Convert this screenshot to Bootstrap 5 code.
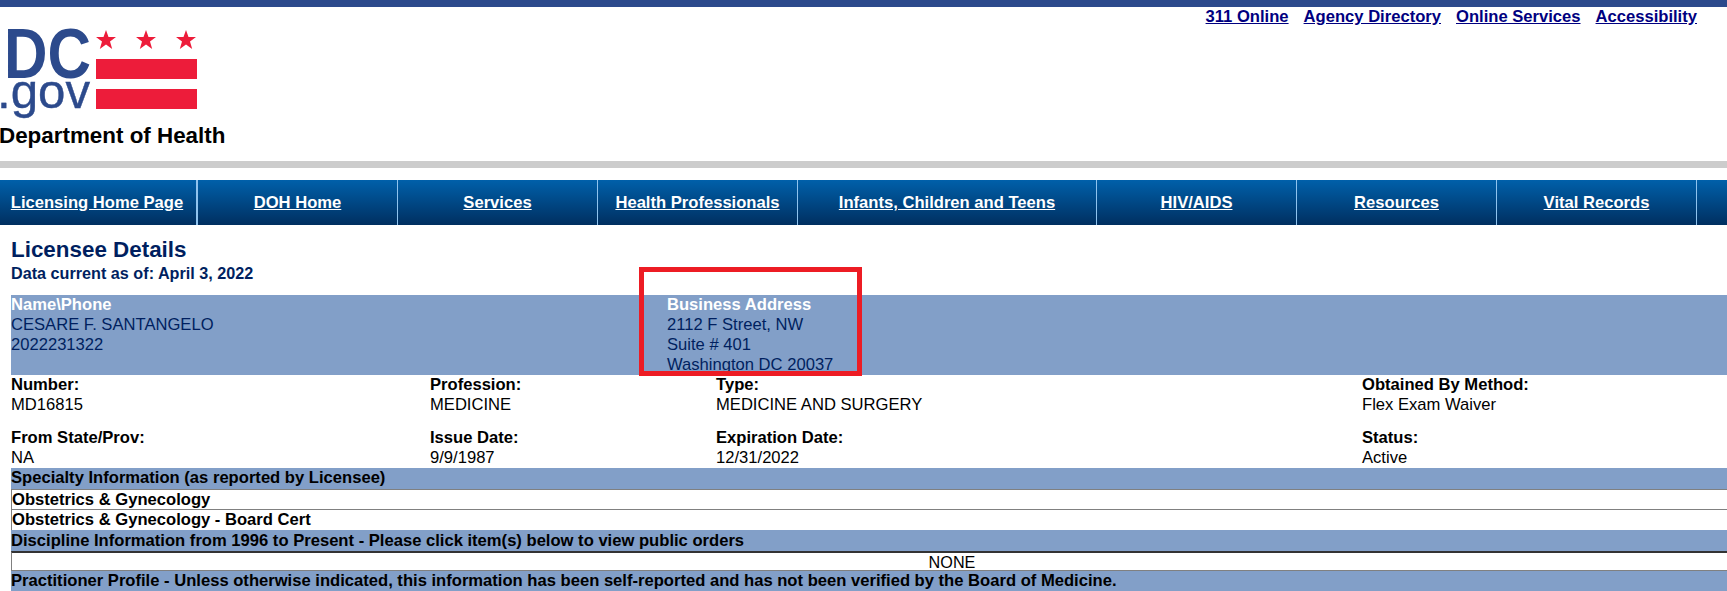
<!DOCTYPE html>
<html lang="en">
<head>
<meta charset="utf-8">
<title>Licensee Details</title>
<link href="https://cdn.jsdelivr.net/npm/bootstrap@5.3.0/dist/css/bootstrap.min.css" rel="stylesheet">
<style>
html,body{margin:0;background:#fff;overflow:hidden}
body{font-family:"Liberation Sans",Arial,sans-serif;font-size:16.6px;line-height:20px;color:#000;height:591px;width:1727px;position:relative}
.topstrip{height:7px;background:#2c4a8c}
.headwrap{height:154px;position:relative}
.toplinks{justify-content:flex-end;gap:15px;padding-right:30px;height:20px;font-size:16.6px;font-weight:700}
.toplinks a{color:#000080}
.logo{display:block;margin-top:-1px;overflow:visible}
.logotxt{font-family:"Liberation Sans",Arial,sans-serif;fill:#2c4a8c}
.govtxt{stroke:#2c4a8c;stroke-width:.4}
.dept{font-size:22.4px;font-weight:700;line-height:25px;margin-top:-3px;margin-left:-1px;color:#000}
.greybar{height:7px;background:#cccccc}
.menubar{height:45px;margin-top:12px;background:linear-gradient(#0060aa,#002f60)}
.menucell{width:200px;height:45px;display:flex;align-items:center;justify-content:center;border-right:1px solid #8fc3ee;flex:none;padding-top:1px}
.menucell.wide{width:299px}
.menucell.first{width:198px;border-right-width:2px;padding-right:2px}
.menucell a{color:#fff;font-weight:700;font-size:16.6px}
.content{padding-left:11px}
.pagetitle{color:#001f5f;font-size:22.4px;font-weight:700;line-height:26px;margin-top:12px}
.asof{color:#001f5f;font-size:16.2px;font-weight:700;line-height:20px}
.band{background:#829fc8;height:80px;margin-top:12px;color:#001f5f}
.band b{color:#fff;display:block}
.col-a{width:656px;flex:none}
.c1{width:419px;flex:none}
.c2{width:286px;flex:none}
.c3{width:646px;flex:none}
.detail{height:53px}
.detail + .detail{height:40px}
.detail b{display:block}
.sect{background:#829fc8;height:20.6px;line-height:20px;font-weight:700;font-size:16.6px}
.sect.lowtext{line-height:22px}
.plainrow{background:#fff;height:20.7px;line-height:19px;border-top:1px solid #808080;border-left:1px solid #808080;font-weight:700;font-size:16.6px;width:1880px}
.sectwide{width:1880px}
.nonerow{background:#fff;line-height:18px;border-top:2px solid #333;border-left:1px solid #808080;border-bottom:1px solid #808080;text-align:center;width:1880px;box-sizing:content-box;height:17px;font-size:16.2px}
.redbox{position:absolute;left:639px;top:267px;width:223px;height:109px;border:5px solid #ed1c24}
</style>
</head>
<body>
<div class="topstrip"></div>
<div class="headwrap">
  <div class="d-flex toplinks">
    <a href="#">311 Online</a><a href="#">Agency Directory</a><a href="#">Online Services</a><a href="#">Accessibility</a>
  </div>
  <svg class="logo" width="230" height="100" viewBox="0 0 230 100" xmlns="http://www.w3.org/2000/svg" role="img" aria-label="DC.gov">
    <text class="logotxt" x="4" y="52" font-size="70" font-weight="700" textLength="87" lengthAdjust="spacingAndGlyphs">DC</text>
    <text class="logotxt govtxt" x="-3" y="82" font-size="49" textLength="93" lengthAdjust="spacingAndGlyphs">.gov</text>
    <polygon fill="#ed1c3a" points="106,4 108.5,11 116,11 110,15.5 112.2,23 106,18.5 99.8,23 102,15.5 96,11 103.5,11"/>
    <polygon fill="#ed1c3a" points="146,4 148.5,11 156,11 150,15.5 152.2,23 146,18.5 139.8,23 142,15.5 136,11 143.5,11"/>
    <polygon fill="#ed1c3a" points="186,4 188.5,11 196,11 190,15.5 192.2,23 186,18.5 179.8,23 182,15.5 176,11 183.5,11"/>
    <rect x="96" y="33" width="101" height="20" fill="#ed1c3a"/>
    <rect x="96" y="63" width="101" height="20" fill="#ed1c3a"/>
  </svg>
  <div class="dept">Department of Health</div>
</div>
<div class="greybar"></div>
<div class="d-flex menubar">
  <div class="menucell first"><a href="#">Licensing Home Page</a></div>
  <div class="menucell"><a href="#">DOH Home</a></div>
  <div class="menucell"><a href="#">Services</a></div>
  <div class="menucell"><a href="#">Health Professionals</a></div>
  <div class="menucell wide"><a href="#">Infants, Children and Teens</a></div>
  <div class="menucell"><a href="#">HIV/AIDS</a></div>
  <div class="menucell"><a href="#">Resources</a></div>
  <div class="menucell"><a href="#">Vital Records</a></div>
</div>
<div class="content">
  <div class="pagetitle">Licensee Details</div>
  <div class="asof">Data current as of: April 3, 2022</div>
  <div class="d-flex band">
    <div class="col-a"><b>Name\Phone</b>CESARE F. SANTANGELO<br>2022231322</div>
    <div><b>Business Address</b>2112 F Street, NW<br>Suite # 401<br>Washington DC 20037</div>
  </div>
  <div class="d-flex detail">
    <div class="c1"><b>Number:</b>MD16815</div>
    <div class="c2"><b>Profession:</b>MEDICINE</div>
    <div class="c3"><b>Type:</b>MEDICINE AND SURGERY</div>
    <div><b>Obtained By Method:</b>Flex Exam Waiver</div>
  </div>
  <div class="d-flex detail">
    <div class="c1"><b>From State/Prov:</b>NA</div>
    <div class="c2"><b>Issue Date:</b>9/9/1987</div>
    <div class="c3"><b>Expiration Date:</b>12/31/2022</div>
    <div><b>Status:</b>Active</div>
  </div>
  <div class="sect sectwide">Specialty Information (as reported by Licensee)</div>
  <div class="plainrow">Obstetrics &amp; Gynecology</div>
  <div class="plainrow">Obstetrics &amp; Gynecology - Board Cert</div>
  <div class="sect sectwide lowtext">Discipline Information from 1996 to Present - Please click item(s) below to view public orders</div>
  <div class="nonerow">NONE</div>
  <div class="sect sectwide">Practitioner Profile - Unless otherwise indicated, this information has been self-reported and has not been verified by the Board of Medicine.</div>
</div>
<div class="redbox"></div>
<script src="https://cdn.jsdelivr.net/npm/bootstrap@5.3.0/dist/js/bootstrap.bundle.min.js"></script>
</body>
</html>
